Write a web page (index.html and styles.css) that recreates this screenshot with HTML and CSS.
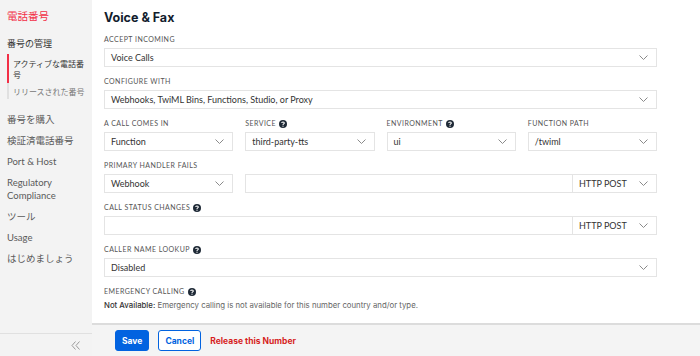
FILE: index.html
```html
<!DOCTYPE html>
<html lang="ja">
  <head>
    <meta charset="UTF-8" />
    <meta name="viewport" content="width=device-width, initial-scale=1.0" />
    <title>Voice &amp; Fax</title>
    <link rel="stylesheet" href="styles.css">
  </head>
  <body>
    <div class="layout">
      <!-- Sidebar -->
      <aside class="sidebar">
        <nav class="side-nav">
          <div class="side-title">電話番号</div>
          <div class="side-group">番号の管理</div>
          <ul class="sub-list">
            <li class="active">アクティブな電話番号</li>
            <li>リリースされた番号</li>
          </ul>
          <ul class="side-links">
            <li>番号を購入</li>
            <li>検証済電話番号</li>
            <li>Port &amp; Host</li>
            <li>Regulatory Compliance</li>
            <li>ツール</li>
            <li>Usage</li>
            <li>はじめましょう</li>
          </ul>
        </nav>
        <div class="collapse">
          <svg width="10" height="9" viewBox="0 0 10 9">
            <path d="M4.5 0.5 L1 4.5 L4.5 8.5 M8.5 0.5 L5 4.5 L8.5 8.5" fill="none" stroke="#9a9a9a" stroke-width="1"/>
          </svg>
        </div>
      </aside>

      <!-- Main -->
      <main class="main">
        <div class="content">
          <h2 class="section-title">Voice &amp; Fax</h2>

          <div class="field">
            <label>Accept Incoming</label>
            <div class="select">
              <span>Voice Calls</span>
              <svg class="chev" width="9" height="5" viewBox="0 0 9 5"><path d="M0.5 0.5 L4.5 4.5 L8.5 0.5" fill="none" stroke="#8a8a8a"/></svg>
            </div>
          </div>

          <div class="field">
            <label>Configure With</label>
            <div class="select">
              <span>Webhooks, TwiML Bins, Functions, Studio, or Proxy</span>
              <svg class="chev" width="9" height="5" viewBox="0 0 9 5"><path d="M0.5 0.5 L4.5 4.5 L8.5 0.5" fill="none" stroke="#8a8a8a"/></svg>
            </div>
          </div>

          <div class="field-row">
            <div class="field">
              <label>A Call Comes In</label>
              <div class="select">
                <span>Function</span>
                <svg class="chev" width="9" height="5" viewBox="0 0 9 5"><path d="M0.5 0.5 L4.5 4.5 L8.5 0.5" fill="none" stroke="#8a8a8a"/></svg>
              </div>
            </div>
            <div class="field">
              <label>Service
                <svg class="help" width="8" height="8" viewBox="0 0 8 8"><circle cx="4" cy="4" r="4" fill="#1f2a37"/><path d="M2.7 3 C2.7 1.6 5.3 1.6 5.3 3 C5.3 3.9 4 3.9 4 4.9" fill="none" stroke="#fff" stroke-width="1.1"/><circle cx="4" cy="6.2" r="0.6" fill="#fff"/></svg>
              </label>
              <div class="select">
                <span>third-party-tts</span>
                <svg class="chev" width="9" height="5" viewBox="0 0 9 5"><path d="M0.5 0.5 L4.5 4.5 L8.5 0.5" fill="none" stroke="#8a8a8a"/></svg>
              </div>
            </div>
            <div class="field">
              <label>Environment
                <svg class="help" width="8" height="8" viewBox="0 0 8 8"><circle cx="4" cy="4" r="4" fill="#1f2a37"/><path d="M2.7 3 C2.7 1.6 5.3 1.6 5.3 3 C5.3 3.9 4 3.9 4 4.9" fill="none" stroke="#fff" stroke-width="1.1"/><circle cx="4" cy="6.2" r="0.6" fill="#fff"/></svg>
              </label>
              <div class="select">
                <span>ui</span>
                <svg class="chev" width="9" height="5" viewBox="0 0 9 5"><path d="M0.5 0.5 L4.5 4.5 L8.5 0.5" fill="none" stroke="#8a8a8a"/></svg>
              </div>
            </div>
            <div class="field">
              <label>Function Path</label>
              <div class="select">
                <span>/twiml</span>
                <svg class="chev" width="9" height="5" viewBox="0 0 9 5"><path d="M0.5 0.5 L4.5 4.5 L8.5 0.5" fill="none" stroke="#8a8a8a"/></svg>
              </div>
            </div>
          </div>

          <div class="field">
            <label>Primary Handler Fails</label>
            <div class="handler-row">
              <div class="select">
                <span>Webhook</span>
                <svg class="chev" width="9" height="5" viewBox="0 0 9 5"><path d="M0.5 0.5 L4.5 4.5 L8.5 0.5" fill="none" stroke="#8a8a8a"/></svg>
              </div>
              <div class="url-group">
                <div class="input"></div>
                <div class="select method">
                  <span>HTTP POST</span>
                  <svg class="chev" width="9" height="5" viewBox="0 0 9 5"><path d="M0.5 0.5 L4.5 4.5 L8.5 0.5" fill="none" stroke="#8a8a8a"/></svg>
                </div>
              </div>
            </div>
          </div>

          <div class="field">
            <label>Call Status Changes
              <svg class="help" width="8" height="8" viewBox="0 0 8 8"><circle cx="4" cy="4" r="4" fill="#1f2a37"/><path d="M2.7 3 C2.7 1.6 5.3 1.6 5.3 3 C5.3 3.9 4 3.9 4 4.9" fill="none" stroke="#fff" stroke-width="1.1"/><circle cx="4" cy="6.2" r="0.6" fill="#fff"/></svg>
            </label>
            <div class="url-group">
              <div class="input"></div>
              <div class="select method">
                <span>HTTP POST</span>
                <svg class="chev" width="9" height="5" viewBox="0 0 9 5"><path d="M0.5 0.5 L4.5 4.5 L8.5 0.5" fill="none" stroke="#8a8a8a"/></svg>
              </div>
            </div>
          </div>

          <div class="field">
            <label>Caller Name Lookup
              <svg class="help" width="8" height="8" viewBox="0 0 8 8"><circle cx="4" cy="4" r="4" fill="#1f2a37"/><path d="M2.7 3 C2.7 1.6 5.3 1.6 5.3 3 C5.3 3.9 4 3.9 4 4.9" fill="none" stroke="#fff" stroke-width="1.1"/><circle cx="4" cy="6.2" r="0.6" fill="#fff"/></svg>
            </label>
            <div class="select">
              <span>Disabled</span>
              <svg class="chev" width="9" height="5" viewBox="0 0 9 5"><path d="M0.5 0.5 L4.5 4.5 L8.5 0.5" fill="none" stroke="#8a8a8a"/></svg>
            </div>
          </div>

          <div class="field">
            <label>Emergency Calling
              <svg class="help" width="8" height="8" viewBox="0 0 8 8"><circle cx="4" cy="4" r="4" fill="#1f2a37"/><path d="M2.7 3 C2.7 1.6 5.3 1.6 5.3 3 C5.3 3.9 4 3.9 4 4.9" fill="none" stroke="#fff" stroke-width="1.1"/><circle cx="4" cy="6.2" r="0.6" fill="#fff"/></svg>
            </label>
            <p class="note"><strong>Not Available:</strong> Emergency calling is not available for this number country and/or type.</p>
          </div>
        </div>

        <!-- Action bar -->
        <footer class="actions">
          <button class="btn btn-primary">Save</button>
          <button class="btn btn-secondary">Cancel</button>
          <a class="release" href="#">Release this Number</a>
        </footer>
      </main>
    </div>
  </body>
</html>
```

FILE: styles.css
```css
/* Page */
body {
  margin: 0;
  font-family: "Lato", "Noto Sans CJK JP", sans-serif;
  color: #333;
  background-color: #fff;
}

.layout {
  display: flex;
  height: 100vh;
  overflow: hidden;
}

/* Sidebar */
.sidebar {
  width: 92px;
  flex-shrink: 0;
  background-color: #f3f3f3;
  display: flex;
  flex-direction: column;
}

.side-nav {
  flex: 1;
  padding: 9px 4px 0 7px;
}

.side-title {
  font-family: "Noto Sans CJK JP", sans-serif;
  font-size: 10.5px;
  line-height: 14px;
  color: #f22f46;
}

.side-group {
  font-family: "Noto Sans CJK JP", sans-serif;
  font-size: 9px;
  line-height: 13px;
  color: #333;
  margin-top: 14px;
}

.sub-list {
  list-style: none;
  margin: 4px 0 0;
  padding: 0;
}

.sub-list li {
  font-family: "Noto Sans CJK JP", sans-serif;
  font-size: 8px;
  line-height: 11px;
  color: #777;
  padding: 2.5px 0 2.5px 4px;
  border-left: 2px solid #e0e0e0;
}

.sub-list li.active {
  color: #333;
  padding: 3.5px 0 3.5px 4px;
  border-left-color: #f22f46;
}

.side-links {
  list-style: none;
  margin: 10px 0 0;
  padding: 0;
}

.side-links li {
  font-size: 9.5px;
  line-height: 13.5px;
  padding: 3.75px 0;
  color: #5a5a5a;
}

.collapse {
  height: 22px;
  border-top: 1px solid #e0e0e0;
  display: flex;
  align-items: center;
  justify-content: flex-end;
  padding-right: 11px;
}

/* Main */
.main {
  flex: 1;
  display: flex;
  flex-direction: column;
  min-width: 0;
}

.content {
  flex: 1;
  padding: 10px 43px 0 12px;
}

.section-title {
  font-family: "Inter", sans-serif;
  font-size: 12.5px;
  line-height: 15px;
  font-weight: 700;
  color: #121c2d;
  margin: 0 0 10px;
}

.field {
  margin-bottom: 10px;
}

label {
  display: flex;
  align-items: center;
  gap: 3px;
  font-size: 7px;
  line-height: 9px;
  letter-spacing: 0.45px;
  text-transform: uppercase;
  color: #555;
  margin-bottom: 4px;
}

.help {
  display: block;
}

/* Selects and inputs */
.select,
.input {
  box-sizing: border-box;
  height: 19px;
  border: 1px solid #e4e4e4;
  background-color: #fff;
  font-size: 9px;
  color: #333;
}

.select {
  display: flex;
  align-items: center;
  justify-content: space-between;
  padding: 0 8px 0 6px;
}

.chev {
  flex-shrink: 0;
}

.field-row {
  display: grid;
  grid-template-columns: repeat(4, 1fr);
  column-gap: 12px;
}

.handler-row {
  display: grid;
  grid-template-columns: 129px 1fr;
  column-gap: 12px;
}

.url-group {
  display: flex;
}

.url-group .input {
  flex: 1;
  border-right: none;
}

.select.method {
  width: 85px;
}

.note {
  font-family: "Inter", sans-serif;
  font-size: 7.8px;
  line-height: 11px;
  color: #666;
  margin: 0;
}

.note strong {
  font-weight: 500;
  color: #333;
}

/* Action bar */
.actions {
  height: 31px;
  border-top: 2px solid #dcdcdc;
  background-color: #f4f4f4;
  display: flex;
  align-items: center;
  gap: 9px;
  padding-left: 23px;
}

.btn {
  font-family: "Inter", sans-serif;
  font-size: 8.5px;
  font-weight: 700;
  height: 21px;
  padding: 0 6px;
  border-radius: 3px;
  cursor: pointer;
}

.btn-primary {
  background-color: #0263e0;
  border: 1px solid #0263e0;
  color: #fff;
}

.btn-secondary {
  background-color: #fff;
  border: 1px solid #0263e0;
  color: #0263e0;
}

.release {
  font-family: "Inter", sans-serif;
  font-size: 8.5px;
  font-weight: 700;
  color: #d61f1f;
  text-decoration: none;
}
```
